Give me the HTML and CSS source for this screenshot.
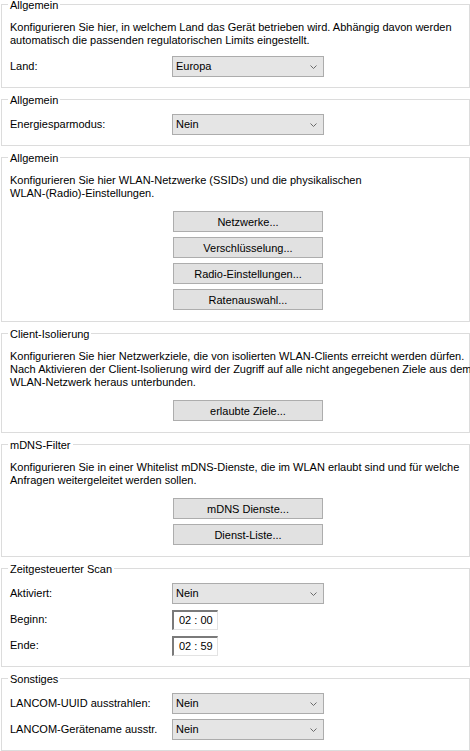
FILE: index.html
```html
<!DOCTYPE html>
<html lang="de">
<head>
  <meta charset="UTF-8">
  <meta name="viewport" content="width=device-width, initial-scale=1.0">
  <title>WLAN</title>
  <link rel="stylesheet" href="styles.css">
</head>
<body>
  <div class="dialog">

    <section class="group">
      <div class="group-title">Allgemein</div>
      <p class="note">Konfigurieren Sie hier, in welchem Land das Gerät betrieben wird. Abhängig davon werden<br>automatisch die passenden regulatorischen Limits eingestellt.</p>
      <div class="rows">
        <div class="row">
          <span class="row-label">Land:</span>
          <div class="combo"><span>Europa</span><svg width="7" height="4" viewBox="0 0 7 4"><polyline points="0.5,0.5 3.5,3.5 6.5,0.5" /></svg></div>
        </div>
      </div>
    </section>

    <section class="group">
      <div class="group-title">Allgemein</div>
      <div class="rows">
        <div class="row">
          <span class="row-label">Energiesparmodus:</span>
          <div class="combo"><span>Nein</span><svg width="7" height="4" viewBox="0 0 7 4"><polyline points="0.5,0.5 3.5,3.5 6.5,0.5" /></svg></div>
        </div>
      </div>
    </section>

    <section class="group">
      <div class="group-title">Allgemein</div>
      <p class="note">Konfigurieren Sie hier WLAN-Netzwerke (SSIDs) und die physikalischen<br>WLAN-(Radio)-Einstellungen.</p>
      <div class="buttons">
        <button class="btn">Netzwerke...</button>
        <button class="btn">Verschlüsselung...</button>
        <button class="btn">Radio-Einstellungen...</button>
        <button class="btn">Ratenauswahl...</button>
      </div>
    </section>

    <section class="group">
      <div class="group-title">Client-Isolierung</div>
      <p class="note">Konfigurieren Sie hier Netzwerkziele, die von isolierten WLAN-Clients erreicht werden dürfen.<br>Nach Aktivieren der Client-Isolierung wird der Zugriff auf alle nicht angegebenen Ziele aus dem<br>WLAN-Netzwerk heraus unterbunden.</p>
      <div class="buttons">
        <button class="btn">erlaubte Ziele...</button>
      </div>
    </section>

    <section class="group">
      <div class="group-title">mDNS-Filter</div>
      <p class="note">Konfigurieren Sie in einer Whitelist mDNS-Dienste, die im WLAN erlaubt sind und für welche<br>Anfragen weitergeleitet werden sollen.</p>
      <div class="buttons">
        <button class="btn">mDNS Dienste...</button>
        <button class="btn">Dienst-Liste...</button>
      </div>
    </section>

    <section class="group">
      <div class="group-title">Zeitgesteuerter Scan</div>
      <div class="rows">
        <div class="row">
          <span class="row-label">Aktiviert:</span>
          <div class="combo"><span>Nein</span><svg width="7" height="4" viewBox="0 0 7 4"><polyline points="0.5,0.5 3.5,3.5 6.5,0.5" /></svg></div>
        </div>
        <div class="row">
          <span class="row-label">Beginn:</span>
          <div class="time">02 : 00</div>
        </div>
        <div class="row">
          <span class="row-label">Ende:</span>
          <div class="time">02 : 59</div>
        </div>
      </div>
    </section>

    <section class="group">
      <div class="group-title">Sonstiges</div>
      <div class="rows">
        <div class="row">
          <span class="row-label">LANCOM-UUID ausstrahlen:</span>
          <div class="combo"><span>Nein</span><svg width="7" height="4" viewBox="0 0 7 4"><polyline points="0.5,0.5 3.5,3.5 6.5,0.5" /></svg></div>
        </div>
        <div class="row">
          <span class="row-label">LANCOM-Gerätename ausstr.</span>
          <div class="combo"><span>Nein</span><svg width="7" height="4" viewBox="0 0 7 4"><polyline points="0.5,0.5 3.5,3.5 6.5,0.5" /></svg></div>
        </div>
      </div>
    </section>

  </div>
</body>
</html>
```

FILE: styles.css
```css
body {
  margin: 0;
  background: #fff;
  color: #000;
  font-family: "Liberation Sans", Arial, sans-serif;
  font-size: 11px;
  line-height: 13px;
}
.dialog {
  padding: 4px 0 0 1px;
}
.group {
  border: 1px solid #dcdcdc;
  margin-bottom: 11px;
  padding: 0 8px 10px 8px;
}
.group-title {
  width: fit-content;
  margin: -6px 0 7px -2px;
  padding: 0 2px;
  background: #fff;
  white-space: nowrap;
}
.note {
  margin: 0 0 11px 0;
  padding-top: 2px;
  white-space: nowrap;
}
.note + .rows {
  margin-top: -2px;
}
.note + .buttons {
  margin-bottom: 1px;
}
.rows {
  display: flex;
  flex-direction: column;
  gap: 5px;
}
.row {
  display: flex;
  align-items: center;
  height: 21px;
}
.row-label {
  width: 162px;
  flex-shrink: 0;
  white-space: nowrap;
}
.combo {
  display: flex;
  align-items: center;
  justify-content: space-between;
  box-sizing: border-box;
  width: 152px;
  height: 21px;
  padding: 0 6px 0 3px;
  background: #e5e5e5;
  border: 1px solid #acacac;
}
.combo svg polyline {
  fill: none;
  stroke: #6a6a6a;
  stroke-width: 1;
}
.time {
  box-sizing: border-box;
  width: 46px;
  height: 20px;
  padding: 2px 0 0 5px;
  background: #fff;
  border-style: solid;
  border-width: 2px 1px 1px 2px;
  border-color: #7a7a7a #e3e3e3 #e3e3e3 #7a7a7a;
  white-space: nowrap;
}
.buttons {
  display: flex;
  flex-direction: column;
  gap: 5px;
  padding-left: 163px;
}
.btn {
  box-sizing: border-box;
  width: 150px;
  height: 21px;
  padding: 0;
  background: #e1e1e1;
  border: 1px solid #adadad;
  border-radius: 0;
  color: #000;
  font-family: "Liberation Sans", Arial, sans-serif;
  font-size: 11px;
}
```
